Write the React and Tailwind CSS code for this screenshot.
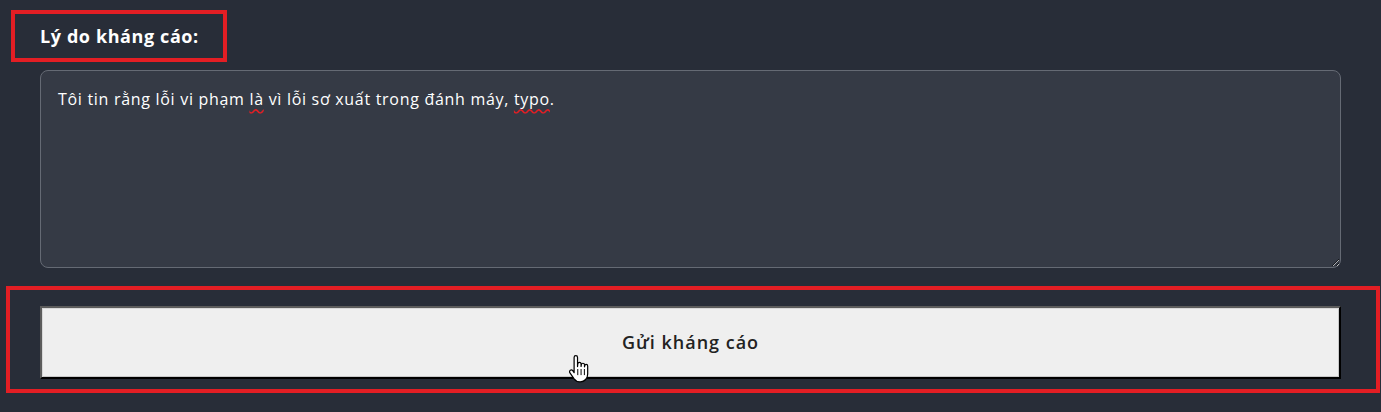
import React from 'react'

const FONT = { fontFamily: '"Open Sans", "Noto Sans", sans-serif' }

function HandCursor() {
  return (
    <svg width="22" height="30" viewBox="0 0 18 24" className="absolute left-[568px] top-[354px]">
      <path
        d="M5 2.5c0-.9.6-1.5 1.4-1.5s1.4.6 1.4 1.5V10l.2-2.2c.1-.8.7-1.3 1.4-1.3s1.3.6 1.3 1.4v2l.2-1.4c.1-.7.7-1.2 1.3-1.2.7 0 1.3.6 1.3 1.3v1.6l.2-.9c.1-.6.6-1 1.2-1 .7 0 1.2.6 1.2 1.3V16c0 3.6-2.4 6.5-6 6.5H9.6c-2 0-3.4-.9-4.6-2.5L1.6 15.2c-.5-.7-.4-1.6.3-2.1.6-.4 1.5-.3 2 .3L5 15V2.5z"
        fill="#fff"
        stroke="#000"
        strokeWidth="1"
        strokeLinejoin="round"
      />
      <path d="M8 12v5M10.7 12v5M13.4 12v5" stroke="#000" strokeWidth="0.8" />
    </svg>
  )
}

export default function App() {
  return (
    <div className="relative w-[1381px] h-[412px] bg-[#282d38] overflow-hidden flex flex-col" style={FONT}>
      {/* Highlighted label */}
      <div className="ml-[11px] mt-[10px] w-[216px] h-[52px] border-4 border-[#e31e24] flex items-center pl-[25px]">
        <span className="text-white text-[18px] font-bold tracking-[0.6px]">Lý do kháng cáo:</span>
      </div>

      {/* Reason box */}
      <div className="ml-[40px] mt-[8px] w-[1301px] h-[198px] rounded-lg border border-[#656a74] bg-[#353a45] px-[17px] py-[16px] resize-y overflow-auto text-white text-[16px] tracking-[0.7px]">
        Tôi tin rằng lỗi vi phạm{' '}
        <span className="underline decoration-wavy decoration-[#e31e24] underline-offset-[3px]">là</span>{' '}
        vì lỗi sơ xuất trong đánh máy,{' '}
        <span className="underline decoration-wavy decoration-[#e31e24] underline-offset-[3px]">typo</span>.
      </div>

      {/* Highlighted submit */}
      <div className="ml-[6px] mt-[18px] w-[1374px] h-[107px] border-4 border-[#e31e24] pl-[30px] pt-[16px]">
        <button className="w-[1301px] h-[73px] bg-[#efefef] border-2 border-t-[#5c5c5c] border-l-[#5c5c5c] border-b-black border-r-black shadow-[inset_1px_1px_0_#d8d8d8,inset_-1px_-1px_0_#c8c8c8] text-[#222] text-[18px] font-semibold tracking-[1px]" style={FONT}>
          Gửi kháng cáo
        </button>
      </div>

      <HandCursor />
    </div>
  )
}
